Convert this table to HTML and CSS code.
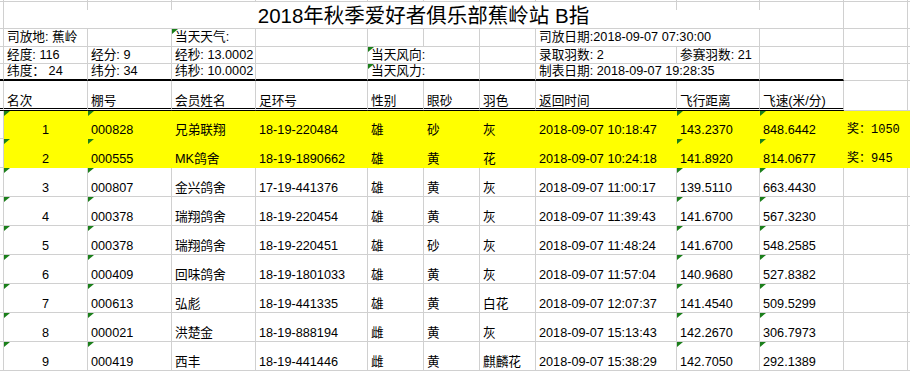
FILE: index.html
```html
<!DOCTYPE html>
<html lang="zh-CN">
<head>
<meta charset="utf-8">
<title>2018年秋季爱好者俱乐部蕉岭站 B指</title>
<link rel="stylesheet" href="styles.css">
</head>
<body>
<div class="sheet">
  <div class="row">
    <div class="c"></div><div class="c"></div><div class="c"></div><div class="c"></div><div class="c"></div><div class="c"></div><div class="c"></div><div class="c"></div><div class="c"></div><div class="c"></div><div class="c"></div><div class="c"></div><div class="c"></div>
  </div>
  <div class="row">
    <div class="c"></div>
    <div class="c title">2018年秋季爱好者俱乐部蕉岭站 B指</div>
    <div class="c"></div><div class="c"></div>
  </div>
  <div class="row info">
    <div class="c"></div>
    <div class="c">司放地: 蕉岭</div>
    <div class="c"></div>
    <div class="c m">当天天气:</div>
    <div class="c"></div><div class="c"></div><div class="c"></div><div class="c"></div>
    <div class="c s2">司放日期:2018-09-07 07:30:00</div>
    <div class="c"></div><div class="c"></div><div class="c"></div>
  </div>
  <div class="row info">
    <div class="c"></div>
    <div class="c">经度: 116</div>
    <div class="c">经分: 9</div>
    <div class="c">经秒: 13.0002</div>
    <div class="c"></div>
    <div class="c s2 m">当天风向:</div>
    <div class="c"></div>
    <div class="c">录取羽数: 2</div>
    <div class="c">参赛羽数: 21</div>
    <div class="c"></div><div class="c"></div><div class="c"></div>
  </div>
  <div class="row info thick">
    <div class="c k"></div>
    <div class="c k">纬度： 24</div>
    <div class="c k">纬分: 34</div>
    <div class="c k">纬秒: 10.0002</div>
    <div class="c k"></div>
    <div class="c k s2 m">当天风力:</div>
    <div class="c k"></div>
    <div class="c k s2">制表日期: 2018-09-07 19:28:35</div>
    <div class="c k"></div>
    <div class="c"></div><div class="c"></div>
  </div>
  <div class="row head">
    <div class="c d"></div>
    <div class="c d">名次</div>
    <div class="c d">棚号</div>
    <div class="c d">会员姓名</div>
    <div class="c d">足环号</div>
    <div class="c d">性别</div>
    <div class="c d">眼砂</div>
    <div class="c d">羽色</div>
    <div class="c d">返回时间</div>
    <div class="c d">飞行距离</div>
    <div class="c d">飞速(米/分)</div>
    <div class="c"></div><div class="c"></div>
  </div>
  <div class="row hl">
    <div class="c"></div>
    <div class="c y ctr m">1</div>
    <div class="c y m">000828</div>
    <div class="c y">兄弟联翔</div>
    <div class="c y">18-19-220484</div>
    <div class="c y">雄</div>
    <div class="c y">砂</div>
    <div class="c y">灰</div>
    <div class="c y">2018-09-07 10:18:47</div>
    <div class="c y m">143.2370</div>
    <div class="c y m">848.6442</div>
    <div class="c y prize">奖：1050</div>
    <div class="c y"></div>
  </div>
  <div class="row hl">
    <div class="c"></div>
    <div class="c y ctr m">2</div>
    <div class="c y m">000555</div>
    <div class="c y">MK鸽舍</div>
    <div class="c y">18-19-1890662</div>
    <div class="c y">雄</div>
    <div class="c y">黄</div>
    <div class="c y">花</div>
    <div class="c y">2018-09-07 10:24:18</div>
    <div class="c y m">141.8920</div>
    <div class="c y m">814.0677</div>
    <div class="c y prize">奖：945</div>
    <div class="c y"></div>
  </div>
  <div class="row">
    <div class="c"></div>
    <div class="c ctr m">3</div><div class="c m">000807</div><div class="c">金兴鸽舍</div><div class="c">17-19-441376</div>
    <div class="c">雄</div><div class="c">黄</div><div class="c">灰</div><div class="c">2018-09-07 11:00:17</div>
    <div class="c m">139.5110</div><div class="c m">663.4430</div><div class="c"></div><div class="c"></div>
  </div>
  <div class="row">
    <div class="c"></div>
    <div class="c ctr m">4</div><div class="c m">000378</div><div class="c">瑞翔鸽舍</div><div class="c">18-19-220454</div>
    <div class="c">雄</div><div class="c">黄</div><div class="c">灰</div><div class="c">2018-09-07 11:39:43</div>
    <div class="c m">141.6700</div><div class="c m">567.3230</div><div class="c"></div><div class="c"></div>
  </div>
  <div class="row">
    <div class="c"></div>
    <div class="c ctr m">5</div><div class="c m">000378</div><div class="c">瑞翔鸽舍</div><div class="c">18-19-220451</div>
    <div class="c">雄</div><div class="c">砂</div><div class="c">灰</div><div class="c">2018-09-07 11:48:24</div>
    <div class="c m">141.6700</div><div class="c m">548.2585</div><div class="c"></div><div class="c"></div>
  </div>
  <div class="row">
    <div class="c"></div>
    <div class="c ctr m">6</div><div class="c m">000409</div><div class="c">回味鸽舍</div><div class="c">18-19-1801033</div>
    <div class="c">雄</div><div class="c">黄</div><div class="c">灰</div><div class="c">2018-09-07 11:57:04</div>
    <div class="c m">140.9680</div><div class="c m">527.8382</div><div class="c"></div><div class="c"></div>
  </div>
  <div class="row">
    <div class="c"></div>
    <div class="c ctr m">7</div><div class="c m">000613</div><div class="c">弘彪</div><div class="c">18-19-441335</div>
    <div class="c">雄</div><div class="c">黄</div><div class="c">白花</div><div class="c">2018-09-07 12:07:37</div>
    <div class="c m">141.4540</div><div class="c m">509.5299</div><div class="c"></div><div class="c"></div>
  </div>
  <div class="row">
    <div class="c"></div>
    <div class="c ctr m">8</div><div class="c m">000021</div><div class="c">洪楚金</div><div class="c">18-19-888194</div>
    <div class="c">雌</div><div class="c">黄</div><div class="c">灰</div><div class="c">2018-09-07 15:13:43</div>
    <div class="c m">142.2670</div><div class="c m">306.7973</div><div class="c"></div><div class="c"></div>
  </div>
  <div class="row">
    <div class="c"></div>
    <div class="c ctr m">9</div><div class="c m">000419</div><div class="c">西丰</div><div class="c">18-19-441446</div>
    <div class="c">雌</div><div class="c">黄</div><div class="c">麒麟花</div><div class="c">2018-09-07 15:38:29</div>
    <div class="c m">142.7050</div><div class="c m">292.1389</div><div class="c"></div><div class="c"></div>
  </div>
</div>
</body>
</html>
```
FILE: styles.css
```css
html, body {
  margin: 0;
  padding: 0;
  background: #fff;
  overflow: hidden;
}

body {
  font-family: "Liberation Sans", "Noto Sans CJK SC", sans-serif;
  color: #000;
}

.sheet {
  display: grid;
  width: 910px;
  grid-template-columns: 4px 84px 84px 84px 112px 56px 56px 56px 141px 83px 84px 64px 2px;
  grid-template-rows: 2px 27px 18px 17px 17px 30px 28px 29px repeat(7, 29px);
}

.row {
  display: contents;
}

.c {
  box-sizing: border-box;
  border-right: 1px solid #d0d0d0;
  border-bottom: 1px solid #d0d0d0;
  display: flex;
  align-items: flex-end;
  padding: 0 0 1px 3px;
  font-size: 12.7px;
  line-height: 13px;
  white-space: nowrap;
  min-width: 0;
  position: relative;
}

.s2 {
  grid-column: span 2;
}

.title {
  grid-column: span 10;
  justify-content: center;
  padding: 0;
  font-size: 20.5px;
  line-height: 24px;
  background:
    linear-gradient(#d0d0d0, #d0d0d0) no-repeat 83px 0 / 1px 8px,
    linear-gradient(#d0d0d0, #d0d0d0) no-repeat 167px 0 / 1px 8px,
    linear-gradient(#d0d0d0, #d0d0d0) no-repeat 672px 0 / 1px 8px,
    linear-gradient(#d0d0d0, #d0d0d0) no-repeat 755px 0 / 1px 8px;
}

.info > .c {
  align-items: center;
  padding-bottom: 0;
}

.thick > .k {
  border-bottom: 2px solid #000;
}

.head > .c {
  padding-bottom: 0;
}

.head > .d {
  border-bottom: 3px double #000;
}

.y {
  background: #ffff00;
  border-color: #ffff00;
}

.ctr {
  justify-content: center;
  padding-left: 0;
}

.prize {
  font-family: "Liberation Mono", "Noto Sans CJK SC", monospace;
  font-size: 12px;
}

.m::before {
  content: "";
  position: absolute;
  left: 0;
  top: 0;
  width: 6px;
  height: 5px;
  background: #1b7f1b;
  clip-path: polygon(0 0, 100% 0, 0 100%);
}
```
